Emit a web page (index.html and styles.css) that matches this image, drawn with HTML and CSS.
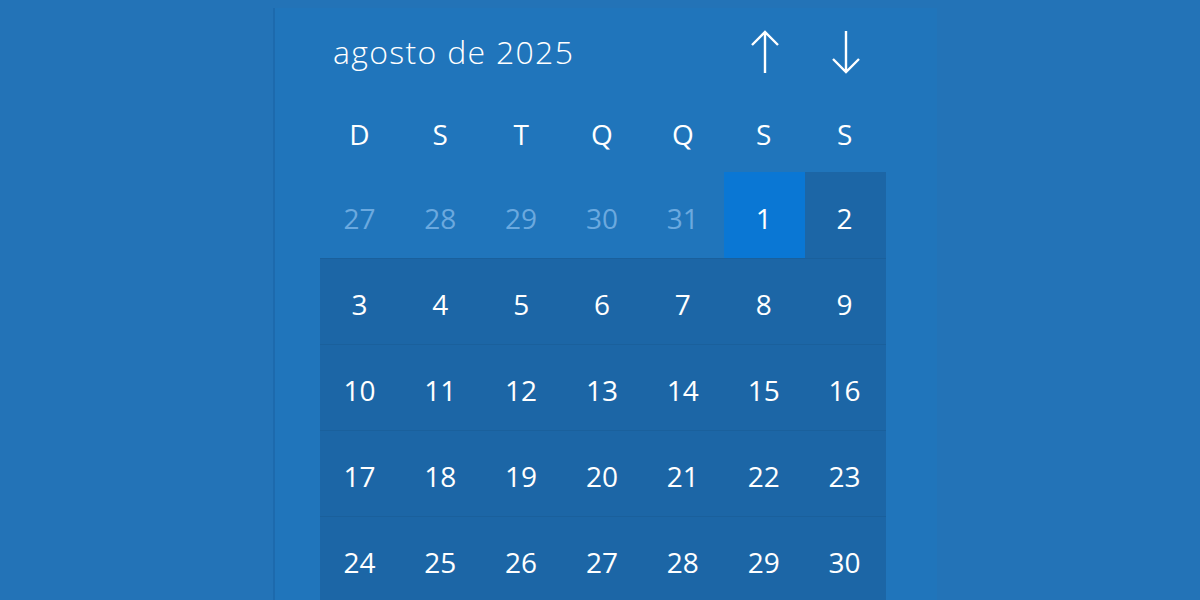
FILE: index.html
```html
<!DOCTYPE html>
<html lang="pt">
<head>
<meta charset="utf-8">
<link rel="stylesheet" href="styles.css">
</head>
<body>
<div class="panel">
  <div class="cal">
    <div class="head">
      <div class="title">agosto de 2025</div>
      <div class="nav">
        <svg width="30" height="44" viewBox="0 0 30 44"><path d="M15 43 V2 M2 15 L15 2 L28 15" fill="none" stroke="#fff" stroke-width="2.4"/></svg>
      </div>
      <div class="nav">
        <svg width="30" height="44" viewBox="0 0 30 44"><path d="M15 1 V42 M2 29 L15 42 L28 29" fill="none" stroke="#fff" stroke-width="2.4"/></svg>
      </div>
    </div>
    <div class="week">
      <div>D</div><div>S</div><div>T</div><div>Q</div><div>Q</div><div>S</div><div>S</div>
    </div>
    <div class="days">
      <div class="row">
        <div class="d out">27</div><div class="d out">28</div><div class="d out">29</div><div class="d out">30</div><div class="d out">31</div><div class="d sel">1</div><div class="d cur">2</div>
      </div>
      <div class="row full">
        <div class="d">3</div><div class="d">4</div><div class="d">5</div><div class="d">6</div><div class="d">7</div><div class="d">8</div><div class="d">9</div>
      </div>
      <div class="row full">
        <div class="d">10</div><div class="d">11</div><div class="d">12</div><div class="d">13</div><div class="d">14</div><div class="d">15</div><div class="d">16</div>
      </div>
      <div class="row full">
        <div class="d">17</div><div class="d">18</div><div class="d">19</div><div class="d">20</div><div class="d">21</div><div class="d">22</div><div class="d">23</div>
      </div>
      <div class="row full">
        <div class="d">24</div><div class="d">25</div><div class="d">26</div><div class="d">27</div><div class="d">28</div><div class="d">29</div><div class="d">30</div>
      </div>
    </div>
  </div>
</div>
</body>
</html>
```

FILE: styles.css
```css
html, body {
  margin: 0;
  height: 100%;
  overflow: hidden;
}
body {
  background: #2373b7;
  font-family: "Open Sans", "Noto Sans", sans-serif;
  color: #fff;
}
.panel {
  margin: 8px 0 0 273px;
  width: 664px;
  height: 600px;
  background: #2075bb;
  border-left: 2px solid #1d6aad;
  padding-left: 45px;
  box-sizing: border-box;
}
.cal {
  width: 566px;
}
.head {
  display: grid;
  grid-template-columns: 5fr 1fr 1fr;
  height: 88px;
  align-items: center;
}
.title {
  padding-left: 13px;
  font-size: 32px;
  font-weight: 300;
  letter-spacing: 1.3px;
  margin-top: -2px;
}
.nav {
  display: flex;
  justify-content: center;
  align-items: center;
}
.week {
  display: grid;
  grid-template-columns: repeat(7, 1fr);
  height: 76px;
  align-items: center;
  font-size: 28px;
}
.week div {
  text-align: center;
  padding-right: 2px;
}
.row {
  display: grid;
  grid-template-columns: repeat(7, 1fr);
  height: 86px;
}
.row.full {
  background: #1c66a6;
  border-top: 1px solid #1a609c;
  box-sizing: border-box;
}
.d {
  display: flex;
  align-items: center;
  justify-content: center;
  font-size: 28px;
  padding-top: 5px;
  padding-right: 2px;
}
.d.out {
  color: #6ba9df;
}
.d.sel {
  background: #0a77d4;
}
.d.cur {
  background: #1c66a6;
}
```
